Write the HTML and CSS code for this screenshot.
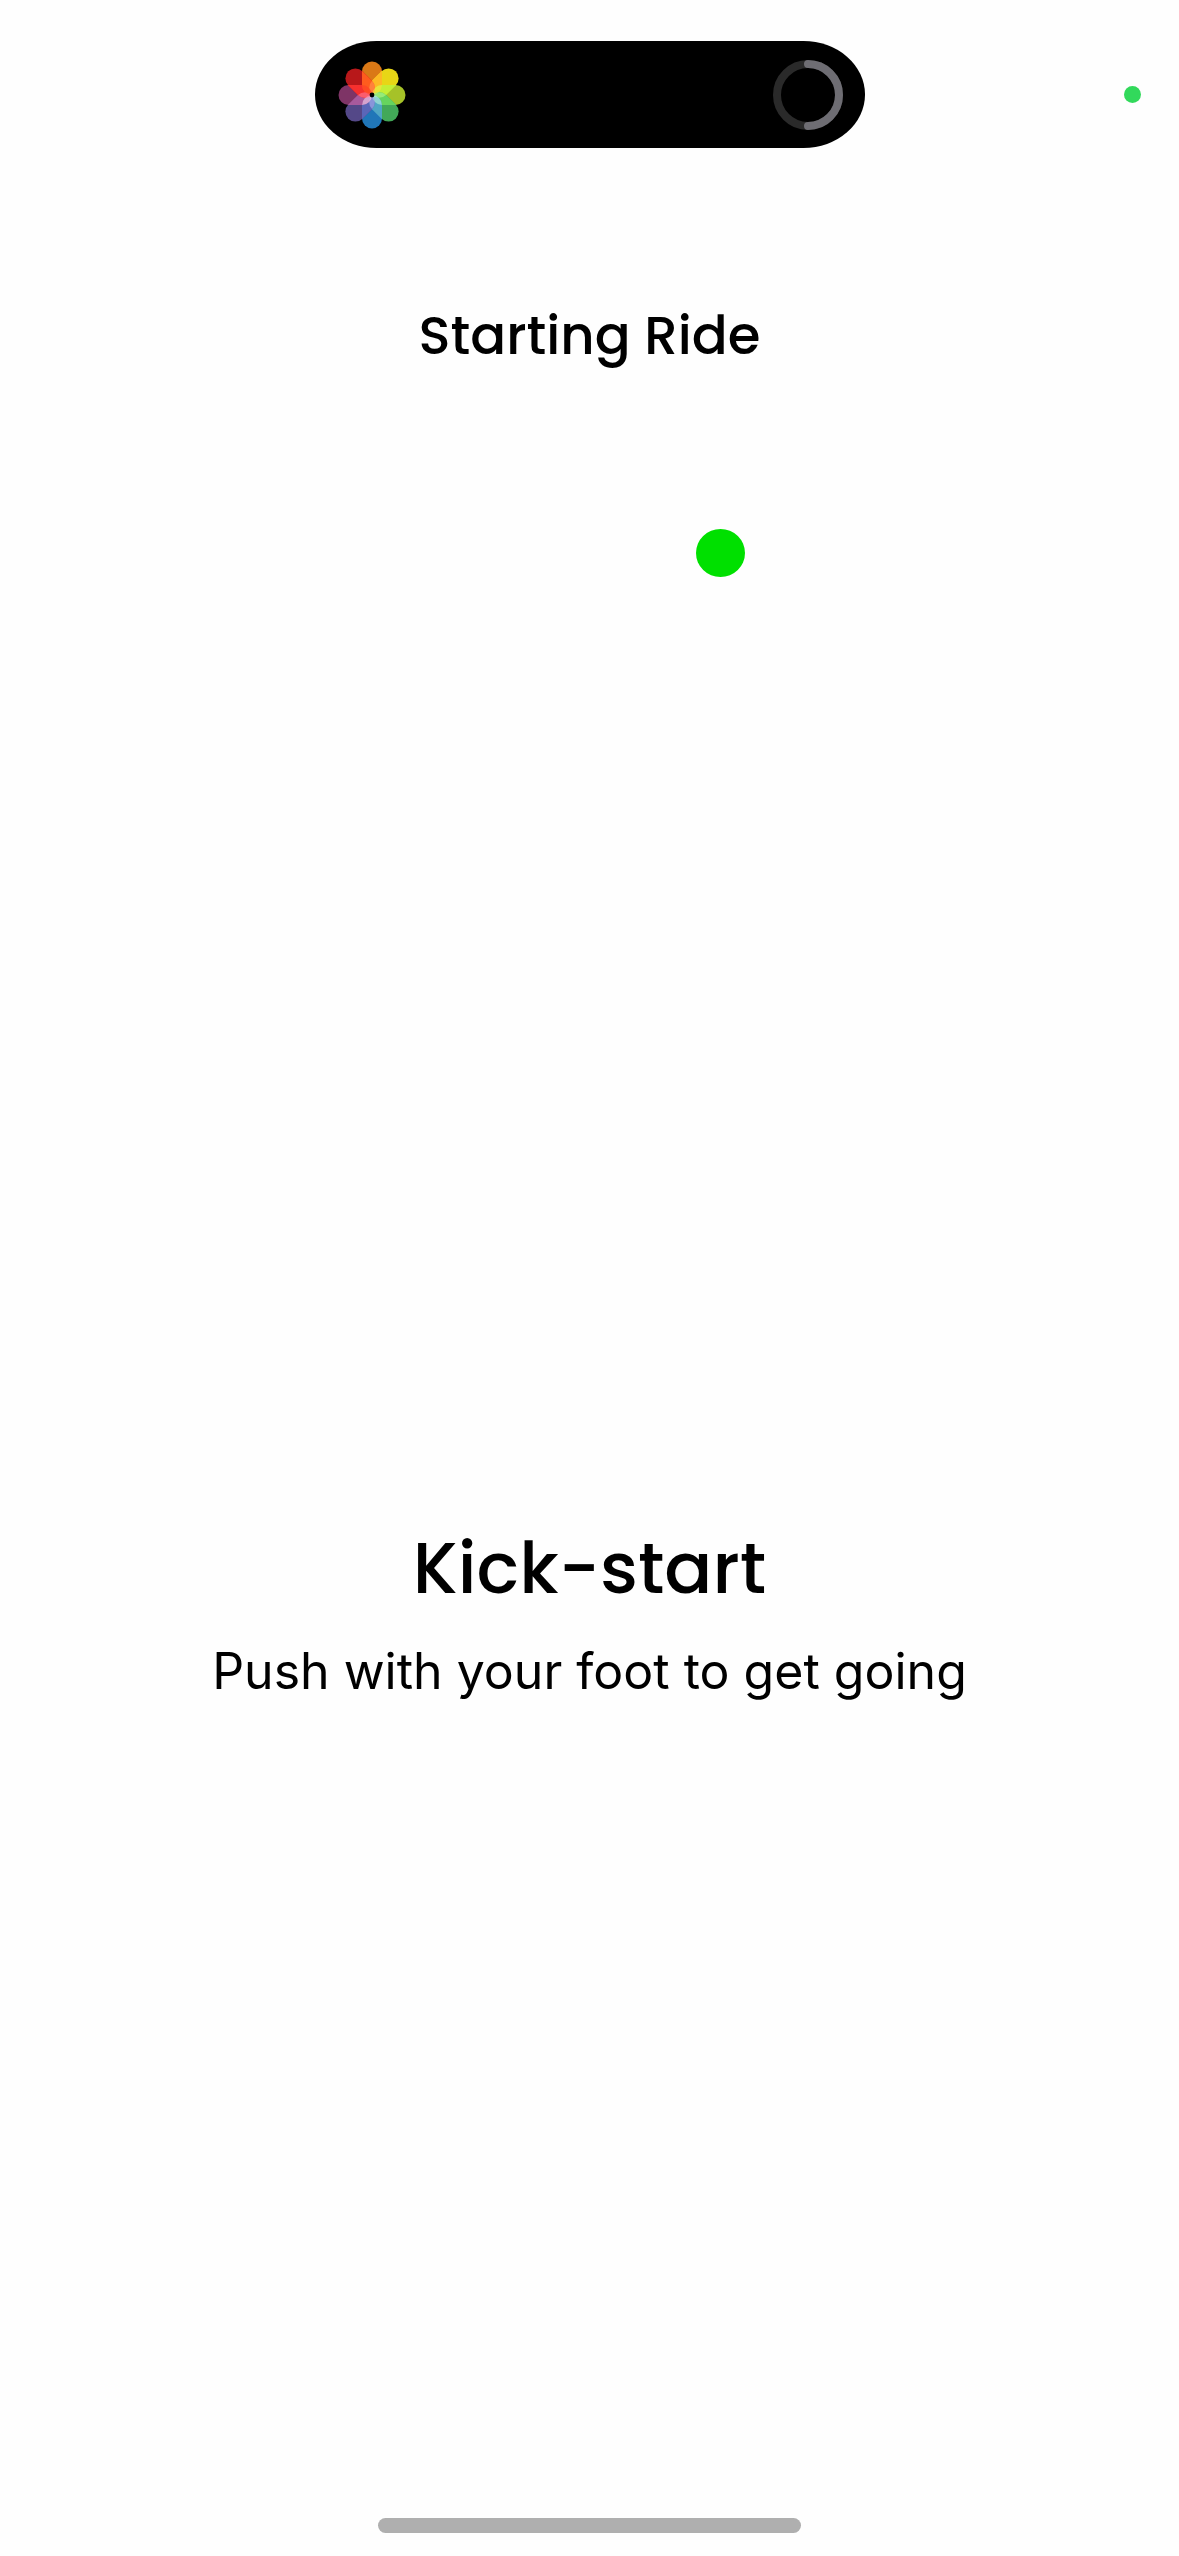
FILE: index.html
```html
<!DOCTYPE html>
<html lang="en">
<head>
  <meta charset="UTF-8" />
  <meta name="viewport" content="width=device-width, initial-scale=1.0"/>
  <title>Starting Ride</title>
  <link rel="stylesheet" href="styles.css">
</head>
<body>
  <div class="status-bar">
    <div class="island">
      <svg class="photos" viewBox="-34 -34 68 68" aria-hidden="true">
        <defs>
          <rect id="petal" x="-10" y="-33.5" width="20" height="33.5" rx="10"/>
          <clipPath id="next">
            <rect x="-10" y="-33.5" width="20" height="33.5" rx="10" transform="rotate(45)"/>
          </clipPath>
          <path id="shine" d="M0 0 A10 10 0 0 1 0 -14 A10 10 0 0 1 0 0Z" opacity="0.6"/>
        </defs>
        <!-- petals -->
        <use href="#petal" fill="#da7816"/>
        <use href="#petal" fill="#e8d616" transform="rotate(45)"/>
        <use href="#petal" fill="#a6c228" transform="rotate(90)"/>
        <use href="#petal" fill="#42a858" transform="rotate(135)"/>
        <use href="#petal" fill="#2076b8" transform="rotate(180)"/>
        <use href="#petal" fill="#544888" transform="rotate(225)"/>
        <use href="#petal" fill="#7e3466" transform="rotate(270)"/>
        <use href="#petal" fill="#b8181a" transform="rotate(315)"/>
        <!-- where each petal crosses the next one -->
        <g clip-path="url(#next)"><use href="#petal" fill="#fdb824"/></g>
        <g transform="rotate(45)"><g clip-path="url(#next)"><use href="#petal" fill="#c4ee34"/></g></g>
        <g transform="rotate(90)"><g clip-path="url(#next)"><use href="#petal" fill="#66d45e"/></g></g>
        <g transform="rotate(135)"><g clip-path="url(#next)"><use href="#petal" fill="#50a6c4"/></g></g>
        <g transform="rotate(180)"><g clip-path="url(#next)"><use href="#petal" fill="#5a66b8"/></g></g>
        <g transform="rotate(225)"><g clip-path="url(#next)"><use href="#petal" fill="#a85a9c"/></g></g>
        <g transform="rotate(270)"><g clip-path="url(#next)"><use href="#petal" fill="#f6302e"/></g></g>
        <g transform="rotate(315)"><g clip-path="url(#next)"><use href="#petal" fill="#ff5c1e"/></g></g>
        <!-- highlights round the middle -->
        <use href="#shine" fill="#ff9a50"/>
        <use href="#shine" fill="#ffe040" transform="rotate(45)"/>
        <use href="#shine" fill="#b4f88c" transform="rotate(90)"/>
        <use href="#shine" fill="#b8f4d8" transform="rotate(135)"/>
        <use href="#shine" fill="#a8b4ee" transform="rotate(180)"/>
        <use href="#shine" fill="#f4d4f0" transform="rotate(225)"/>
        <use href="#shine" fill="#ff7a98" transform="rotate(270)"/>
        <use href="#shine" fill="#ff3c28" transform="rotate(315)"/>
        <circle r="2.4"/>
      </svg>
      <svg class="progress" viewBox="-35 -35 70 70" aria-hidden="true">
        <circle class="track" r="31"/>
        <path class="value" d="M0 -31 A31 31 0 0 1 0 31"/>
      </svg>
    </div>
    <span class="camera-dot"></span>
  </div>

  <header class="header">
    <h1>Starting Ride</h1>
  </header>

  <main class="content">
    <div class="stage">
      <span class="ball"></span>
    </div>
    <h2>Kick-start</h2>
    <p>Push with your foot to get going</p>
  </main>

  <div class="home-indicator"></div>
</body>
</html>
```

FILE: styles.css
```css
* { margin: 0; padding: 0; box-sizing: border-box; }

body {
  min-height: 100vh;
  display: flex;
  flex-direction: column;
  align-items: center;
  background-color: #fefefe;
  color: #000;
  font-family: Inter, "Liberation Sans", sans-serif;
  text-align: center;
}

.status-bar {
  position: relative;
  width: 100%;
  padding-top: 41px;
  display: flex;
  justify-content: center;
}
.island {
  width: 550px;
  height: 107px;
  padding: 0 22px 0 23px;
  display: flex;
  align-items: center;
  justify-content: space-between;
  border-radius: 62px / 54px;
  background-color: #000;
}
.photos {
  width: 68px;
  height: 68px;
}
.progress {
  width: 70px;
  height: 70px;
  fill: none;
  stroke-width: 8;
}
.track { stroke: #2a2a2a; }
.value {
  stroke: #6e6d73;
  stroke-linecap: round;
}

.camera-dot {
  position: absolute;
  top: 86px;
  right: 38px;
  width: 17px;
  height: 17px;
  border-radius: 50%;
  background-color: #32d95b;
}

.header { padding-top: 148px; }
h1 {
  font-family: Poppins, Inter, sans-serif;
  font-size: 53px;
  line-height: 80px;
  font-weight: 500;
}

.content {
  width: 100%;
  flex: 1;
}
.stage {
  position: relative;
  height: 1140px;
}
.ball {
  position: absolute;
  top: 153px;
  left: 59%;
  width: 49px;
  height: 48px;
  border-radius: 50%;
  background-color: #00e000;
}
h2 {
  font-family: Poppins, Inter, sans-serif;
  font-size: 71px;
  line-height: 104px;
  font-weight: 500;
}
p {
  padding-top: 12px;
  font-size: 50px;
  line-height: 78px;
}

.home-indicator {
  width: 423px;
  height: 15px;
  margin-bottom: 23px;
  border-radius: 8px;
  background-color: #afafaf;
}
```
